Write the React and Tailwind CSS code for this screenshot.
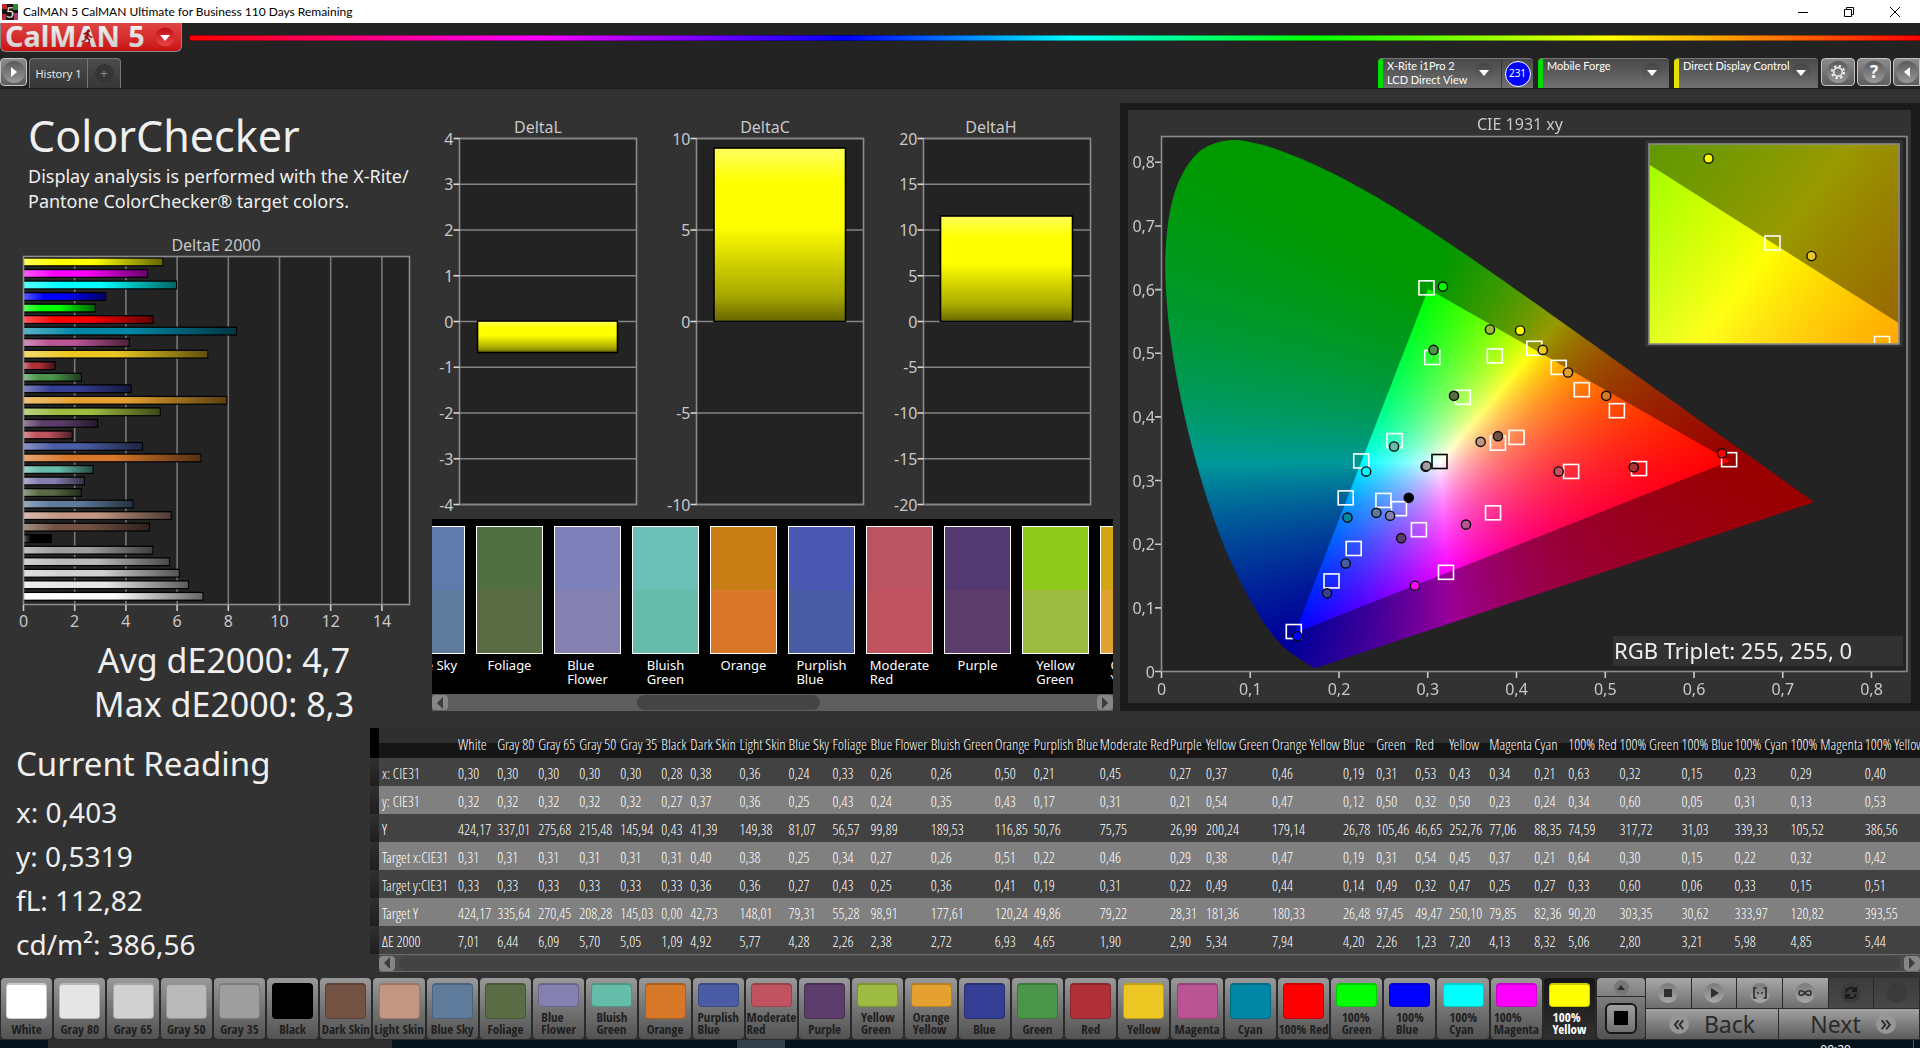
import React, { useLayoutEffect, useRef, useState } from "react";
import clsx from "clsx";

// name, column width, colour, x, y, Y, target x, target y, target Y, dE
const patches = [
  ["White", "w-[39px]", "#ffffff", "0,30", "0,32", "424,17", "0,31", "0,33", "424,17", "7,01"],
  ["Gray 80", "w-[41px]", "#e6e6e6", "0,30", "0,32", "337,01", "0,31", "0,33", "335,64", "6,44"],
  ["Gray 65", "w-[41px]", "#d1d1d1", "0,30", "0,32", "275,68", "0,31", "0,33", "270,45", "6,09"],
  ["Gray 50", "w-[41px]", "#bababa", "0,30", "0,32", "215,48", "0,31", "0,33", "208,28", "5,70"],
  ["Gray 35", "w-[41px]", "#9e9e9e", "0,30", "0,32", "145,94", "0,31", "0,33", "145,03", "5,05"],
  ["Black", "w-[29px]", "#000000", "0,28", "0,27", "0,43", "0,31", "0,33", "0,00", "1,09"],
  ["Dark Skin", "w-[49px]", "#735244", "0,38", "0,37", "41,39", "0,40", "0,36", "42,73", "4,92"],
  ["Light Skin", "w-[49px]", "#c39682", "0,36", "0,36", "149,38", "0,38", "0,36", "148,01", "5,77"],
  ["Blue Sky", "w-[44px]", "#5e7b9c", "0,24", "0,25", "81,07", "0,25", "0,27", "79,31", "4,28"],
  ["Foliage", "w-[38px]", "#596c43", "0,33", "0,43", "56,57", "0,34", "0,43", "55,28", "2,26"],
  ["Blue Flower", "w-[60px]", "#8480af", "0,26", "0,24", "99,89", "0,27", "0,25", "98,91", "2,38"],
  ["Bluish Green", "w-[64px]", "#64bca9", "0,26", "0,35", "189,53", "0,26", "0,36", "177,61", "2,72"],
  ["Orange", "w-[39px]", "#d77829", "0,50", "0,43", "116,85", "0,51", "0,41", "120,24", "6,93"],
  ["Purplish Blue", "w-[66px]", "#4a5ca4", "0,21", "0,17", "50,76", "0,22", "0,19", "49,86", "4,65"],
  ["Moderate Red", "w-[70px]", "#c15360", "0,45", "0,31", "75,75", "0,46", "0,31", "79,22", "1,90"],
  ["Purple", "w-[36px]", "#5c3c6a", "0,27", "0,21", "26,99", "0,29", "0,22", "28,31", "2,90"],
  ["Yellow Green", "w-[66px]", "#9dba41", "0,37", "0,54", "200,24", "0,38", "0,49", "181,36", "5,34"],
  ["Orange Yellow", "w-[71px]", "#e5a12f", "0,46", "0,47", "179,14", "0,47", "0,44", "180,33", "7,94"],
  ["Blue", "w-[33px]", "#343e94", "0,19", "0,12", "26,78", "0,19", "0,14", "26,48", "4,20"],
  ["Green", "w-[39px]", "#4a9549", "0,31", "0,50", "105,46", "0,31", "0,49", "97,45", "2,26"],
  ["Red", "w-[34px]", "#af3037", "0,53", "0,32", "46,65", "0,54", "0,32", "49,47", "1,23"],
  ["Yellow", "w-[40px]", "#ecc722", "0,43", "0,50", "252,76", "0,45", "0,47", "250,10", "7,20"],
  ["Magenta", "w-[45px]", "#ba5493", "0,34", "0,23", "77,06", "0,37", "0,25", "79,85", "4,13"],
  ["Cyan", "w-[34px]", "#0087a6", "0,21", "0,24", "88,35", "0,21", "0,27", "82,36", "8,32"],
  ["100% Red", "w-[51px]", "#ff0000", "0,63", "0,34", "74,59", "0,64", "0,33", "90,20", "5,06"],
  ["100% Green", "w-[62px]", "#00ff00", "0,32", "0,60", "317,72", "0,30", "0,60", "303,35", "2,80"],
  ["100% Blue", "w-[53px]", "#0000ff", "0,15", "0,05", "31,03", "0,15", "0,06", "30,62", "3,21"],
  ["100% Cyan", "w-[56px]", "#00ffff", "0,23", "0,31", "339,33", "0,22", "0,33", "333,97", "5,98"],
  ["100% Magenta", "w-[74px]", "#ff00ff", "0,29", "0,13", "105,52", "0,32", "0,15", "120,82", "4,85"],
  ["100% Yellow", "w-[58px]", "#ffff00", "0,40", "0,53", "386,56", "0,42", "0,51", "393,55", "5,44"],
];

const rowLabels = ["x: CIE31", "y: CIE31", "Y", "Target x:CIE31", "Target y:CIE31", "Target Y", "ΔE 2000"];

// measured over target
const comparator = [
  ["Blue Sky", "#607bab", "#5f7b9c"],
  ["Foliage", "#526f42", "#596c43"],
  ["Blue\nFlower", "#7e80ba", "#8480af"],
  ["Bluish\nGreen", "#6ac0b4", "#64bca9"],
  ["Orange", "#c87e14", "#d97829"],
  ["Purplish\nBlue", "#4a57b3", "#4a5ca4"],
  ["Moderate\nRed", "#ba5463", "#c15360"],
  ["Purple", "#52396f", "#5c3c6a"],
  ["Yellow\nGreen", "#8fc91b", "#9dba41"],
  ["Orange\nYellow", "#d3a514", "#e5a12f"],
];

const locus = [
  [0.1741, 0.005], [0.1733, 0.0048], [0.1714, 0.0051],
  [0.1689, 0.0069], [0.1644, 0.0109], [0.1566, 0.0177], [0.144, 0.0297], [0.1355, 0.0399],
  [0.1241, 0.0578], [0.1096, 0.0868], [0.0913, 0.1327], [0.0687, 0.2007], [0.0454, 0.295],
  [0.0235, 0.4127], [0.0082, 0.5384], [0.0039, 0.6548], [0.0139, 0.7502], [0.0389, 0.812],
  [0.0743, 0.8338], [0.1142, 0.8262], [0.1547, 0.8059], [0.1929, 0.7816], [0.2296, 0.7543],
  [0.2658, 0.7243], [0.3016, 0.6923], [0.3373, 0.6589], [0.3731, 0.6245], [0.4087, 0.5896],
  [0.4441, 0.5547], [0.4788, 0.5202], [0.5125, 0.4866], [0.5448, 0.4544], [0.5752, 0.4242],
  [0.6029, 0.3965], [0.627, 0.3725], [0.6482, 0.3514], [0.6658, 0.334], [0.6915, 0.3083],
  [0.7079, 0.292], [0.719, 0.2809], [0.73, 0.27], [0.7347, 0.2653],
];
const gamut = [[0.64, 0.33], [0.3, 0.6], [0.15, 0.06]];

const targets = [
  [0.298, 0.602], [0.3045, 0.4925], [0.375, 0.495], [0.4195, 0.507], [0.447, 0.477],
  [0.473, 0.442], [0.339, 0.43], [0.5125, 0.409], [0.262, 0.362], [0.2245, 0.33],
  [0.3785, 0.358], [0.3995, 0.367], [0.207, 0.272], [0.2495, 0.268], [0.267, 0.255],
  [0.2895, 0.222], [0.216, 0.1925], [0.191, 0.1415], [0.1485, 0.062], [0.32, 0.155],
  [0.373, 0.2485], [0.461, 0.3135], [0.5375, 0.318], [0.639, 0.332],
];

const readings = [
  [0.3165, 0.604, "#00ff00"], [0.3695, 0.5365, "#9dba41"], [0.4035, 0.535, "#ffff00"],
  [0.429, 0.5045, "#ecc722"], [0.4575, 0.469, "#e5a12f"], [0.306, 0.5045, "#4a9549"],
  [0.329, 0.4323, "#596c43"], [0.5005, 0.4323, "#d77829"], [0.2615, 0.3527, "#64bca9"],
  [0.23, 0.3135, "#00ffff"], [0.297, 0.321, "#ffffff"], [0.298, 0.322, "#9e9e9e"],
  [0.359, 0.36, "#c39682"], [0.3785, 0.369, "#735244"], [0.631, 0.342, "#ff0000"],
  [0.5315, 0.32, "#af3037"], [0.447, 0.3135, "#c15360"], [0.278, 0.272, "#000000"],
  [0.2415, 0.2485, "#5e7b9c"], [0.257, 0.244, "#8480af"], [0.209, 0.241, "#0087a6"],
  [0.3425, 0.23, "#ba5493"], [0.2695, 0.2087, "#5c3c6a"], [0.207, 0.169, "#4a5ca4"],
  [0.186, 0.122, "#343e94"], [0.285, 0.134, "#ff00ff"], [0.1525, 0.0547, "#0000ff"],
];

const num = (s) => parseFloat(s.replace(",", "."));

// plot boxes inside the 783 x 593 drawing
const mainBox = { left: 34, top: 27, w: 745, h: 534, x0: 0, y1: 534 / 636.5, sx: 887.5, sy: 636.5 };
const insetBox = { left: 521, top: 34, w: 250, h: 200, x0: 0.3878, y1: 0.5367, sx: 3976, sy: 3182 };

const toPx = (box, x, y) => [box.left + (x - box.x0) * box.sx, box.top + (box.y1 - y) * box.sy];

// Catmull-Rom through the sampled wavelengths
const smooth = (pts) =>
  pts.flatMap((p1, i) => {
    const p0 = pts[Math.max(i - 1, 0)];
    const p2 = pts[Math.min(i + 1, pts.length - 1)];
    const p3 = pts[Math.min(i + 2, pts.length - 1)];
    return [0, 1, 2, 3, 4, 5, 6, 7].map((n) => {
      const t = n / 8;
      return [0, 1].map(
        (k) =>
          0.5 *
          (2 * p1[k] +
            (p2[k] - p0[k]) * t +
            (2 * p0[k] - 5 * p1[k] + 4 * p2[k] - p3[k]) * t * t +
            (3 * p1[k] - p0[k] - 3 * p2[k] + p3[k]) * t * t * t)
      );
    });
  });

function fillChroma(ctx, box, outline, level) {
  const layer = document.createElement("canvas");
  layer.width = box.w;
  layer.height = box.h;
  const lctx = layer.getContext("2d");
  const img = lctx.createImageData(box.w, box.h);
  for (let j = 0; j < box.h; j++) {
    for (let i = 0; i < box.w; i++) {
      const x = box.x0 + i / box.sx;
      const y = Math.max(box.y1 - j / box.sy, 0.001);
      const X = x / y;
      const Z = (1 - x - y) / y;
      const r = Math.max(0, 3.2406 * X - 1.5372 - 0.4986 * Z);
      const g = Math.max(0, -0.9689 * X + 1.8758 + 0.0415 * Z);
      const b = Math.max(0, 0.0557 * X - 0.204 + 1.057 * Z);
      const k = (255 * level) / Math.max(r, g, b);
      img.data.set([r * k, g * k, b * k, 255], (j * box.w + i) * 4);
    }
  }
  lctx.putImageData(img, 0, 0);
  ctx.save();
  ctx.beginPath();
  ctx.rect(box.left, box.top, box.w, box.h);
  ctx.clip();
  ctx.beginPath();
  outline.forEach(([x, y]) => ctx.lineTo(...toPx(box, x, y)));
  ctx.closePath();
  ctx.clip();
  ctx.drawImage(layer, box.left, box.top);
  ctx.restore();
}

function ChromaCanvas() {
  const ref = useRef(null);
  useLayoutEffect(() => {
    const ctx = ref.current.getContext("2d");
    const horseshoe = smooth(locus);
    ctx.fillStyle = "#232323";
    ctx.fillRect(mainBox.left, mainBox.top, mainBox.w, mainBox.h);
    fillChroma(ctx, mainBox, horseshoe, 0.6);
    fillChroma(ctx, mainBox, gamut, 1);
    ctx.fillStyle = "#323232";
    ctx.fillRect(517, 30, 258, 207);
    fillChroma(ctx, insetBox, horseshoe, 0.6);
    fillChroma(ctx, insetBox, gamut, 1);
  }, []);
  return <canvas ref={ref} width="783" height="593" className="block w-full" />;
}

const Target = ({ cx, cy, stroke = "#ffffff" }) => (
  <rect x={cx - 7.5} y={cy - 7} width="15" height="14" fill="none" stroke={stroke} strokeWidth="1.6" />
);

const Reading = ({ cx, cy, fill }) => (
  <circle cx={cx} cy={cy} r="4.6" fill={fill} stroke="#0a0a0a" strokeWidth="1.4" />
);

function CieChart() {
  const ticks = [0, 1, 2, 3, 4, 5, 6, 7, 8];
  return (
    <div className="bg-[#1a1a1a] pl-2 pr-[9px] pt-[7px] pb-2">
      <div className="relative bg-[#323232]">
        <ChromaCanvas />
        <svg viewBox="0 0 783 593" className="absolute inset-0 w-full h-full text-[16px]" fill="#c8c8c8">
          <text x="392" y="20" textAnchor="middle">CIE 1931 xy</text>
          <rect x="33.5" y="26.5" width="745.5" height="535" fill="none" stroke="#8c8c8c" strokeWidth="1.6" />
          {ticks.map((t) => {
            const [x, y] = [33.5 + t * 88.75, 561.5 - t * 63.65];
            const label = t ? `0,${t}` : "0";
            return (
              <g key={t}>
                <path d={`M${x} 562v6M33 ${y}h-6`} stroke="#c8c8c8" strokeWidth="1.6" />
                <text x={x} y="585" textAnchor="middle">{label}</text>
                <text x="27" y={y + 6} textAnchor="end">{label}</text>
              </g>
            );
          })}
          {targets.map(([x, y]) => {
            const [cx, cy] = toPx(mainBox, x, y);
            return <Target key={`${x}-${y}`} cx={cx} cy={cy} />;
          })}
          <Target cx={311.5} cy={351.5} stroke="#000000" />
          {readings.map(([x, y, fill]) => {
            const [cx, cy] = toPx(mainBox, x, y);
            return <Reading key={`${x}-${y}`} cx={cx} cy={cy} fill={fill} />;
          })}
          <path d="M746.5 233v-6.5h15v6.5" fill="none" stroke="#ffffff" strokeWidth="1.6" />
          <Target cx={644.5} cy={133} />
          <Reading cx={580.5} cy={48.5} fill="#ffff00" />
          <Reading cx={683.5} cy={146} fill="#ecc722" />
          <rect x="521" y="34" width="250" height="200" fill="none" stroke="#8c8c8c" strokeWidth="1.6" />
          <rect x="485" y="526" width="290" height="30" fill="#323232" />
          <text x="486" y="549" fill="#efefef" className="text-[22px]">RGB Triplet: 255, 255, 0</text>
        </svg>
      </div>
    </div>
  );
}

function DeltaEChart() {
  const bars = [...patches].reverse();
  const unit = 25.6;
  return (
    <svg viewBox="0 0 432 424" className="block w-full text-[16px]" fill="#c8c8c8">
      <text x="216" y="37" textAnchor="middle">DeltaE 2000</text>
      <rect x="24" y="43" width="385" height="347" fill="#232323" />
      {[2, 4, 6, 8, 10, 12, 14].map((t) => (
        <path key={t} d={`M${23.5 + t * unit} 43v347`} stroke="#777777" strokeWidth="1.6" />
      ))}
      {bars.map((p, i) => {
        const y = 43.4 + i * 11.53;
        return (
          <g key={p[0]}>
            <linearGradient id={`bar${i}`}>
              <stop offset="0" stopColor={p[2]} />
              <stop offset="0.5" stopColor={p[2]} />
              <stop offset="1" stopColor={p[2]} stopOpacity="0.4" />
            </linearGradient>
            <rect x="24" y={y} width={num(p[9]) * unit} height="9" fill="#000000" />
            <rect x="24" y={y + 1.3} width={num(p[9]) * unit - 1} height="6.5" fill={`url(#bar${i})`} />
            <rect x="24" y={y + 1.3} width={num(p[9]) * unit * 0.25} height="6.5" fill="url(#shine)" />
          </g>
        );
      })}
      <linearGradient id="shine">
        <stop offset="0" stopColor="#ffffff" stopOpacity="0.35" />
        <stop offset="1" stopColor="#ffffff" stopOpacity="0" />
      </linearGradient>
      <rect x="23.5" y="42.5" width="386" height="348" fill="none" stroke="#8c8c8c" strokeWidth="1.6" />
      {[0, 2, 4, 6, 8, 10, 12, 14].map((t) => (
        <g key={t}>
          <path d={`M${23.5 + t * unit} 391v6`} stroke="#c8c8c8" strokeWidth="1.6" />
          <text x={23.5 + t * unit} y="413" textAnchor="middle">{t}</text>
        </g>
      ))}
    </svg>
  );
}

const deltas = [
  { name: "DeltaL", title: 106, left: 27.5, right: 204.5, step: 1, count: 4, bar: [45.5, 185.5, 232.5, 264] },
  { name: "DeltaC", title: 333, left: 264.5, right: 431.5, step: 5, count: 2, bar: [282, 413.5, 59.5, 233] },
  { name: "DeltaH", title: 559, left: 491.5, right: 658.5, step: 5, count: 4, bar: [508.5, 640.5, 127.5, 233] },
];

function DeltaCharts() {
  return (
    <svg viewBox="0 0 688 430" className="block w-full text-[16px]" fill="#c8c8c8">
      <linearGradient id="yellow" x2="0" y2="1">
        <stop offset="0" stopColor="#ffff60" />
        <stop offset="0.2" stopColor="#ffff00" />
        <stop offset="0.45" stopColor="#ffff00" />
        <stop offset="0.85" stopColor="#a8a800" />
        <stop offset="1" stopColor="#666600" />
      </linearGradient>
      {deltas.map((d) => {
        const lines = Array.from({ length: d.count * 2 + 1 }, (_, i) => d.count - i);
        const [x1, x2, y1, y2] = d.bar;
        return (
          <g key={d.name}>
            <text x={d.title} y="44" textAnchor="middle">{d.name}</text>
            <rect x={d.left} y="49.5" width={d.right - d.left} height="366" fill="#232323" stroke="#8c8c8c" strokeWidth="1.6" />
            {lines.map((n, i) => {
              const y = 49.5 + (366 / (d.count * 2)) * i;
              return (
                <g key={n}>
                  <path d={`M${d.left} ${y}H${d.right}`} stroke="#858585" strokeWidth="1.6" />
                  <path d={`M${d.left} ${y}h-6`} stroke="#d8d8d8" strokeWidth="1.6" />
                  <text x={d.left - 6} y={y + 6} textAnchor="end">{n * d.step}</text>
                </g>
              );
            })}
            <rect x={x1} y={y1 - 0.5} width={x2 - x1} height={y2 - y1} fill="url(#yellow)" stroke="#000000" strokeWidth="1.6" />
          </g>
        );
      })}
    </svg>
  );
}

function ScrollButton({ label, flip }) {
  return (
    <button aria-label={label} className="flex w-4 h-[15px] items-center justify-center rounded-sm bg-[#868686]">
      <svg viewBox="0 0 8 12" className={clsx("h-3 w-2", flip && "rotate-180")}>
        <path d="M7 0v12L1 6z" fill="#3c3c3c" />
      </svg>
    </button>
  );
}

function Comparator() {
  return (
    <div className="mr-[7px] bg-black">
      <div className="flex h-[175px] gap-[11px] overflow-hidden pt-[7px] text-[13px] leading-[14px] text-white">
        {comparator.map(([name, top, bottom], i) => (
          <div key={name} className={clsx("flex w-[67px] shrink-0 flex-col items-center", i === 0 && "-ml-[34px]")}>
            <div className="flex h-32 w-full flex-col border border-white">
              <div className="flex-1" style={{ backgroundColor: top }} />
              <div className="flex-1" style={{ backgroundColor: bottom }} />
            </div>
            <p className="whitespace-pre pt-1">{name}</p>
          </div>
        ))}
      </div>
      <div className="flex h-[17px] items-center justify-between bg-[#5e5e5e]">
        <ScrollButton label="Scroll left" />
        <div className="flex flex-1 px-1">
          <div className="grow-[184]" />
          <div className="h-[15px] grow-[182] rounded-full bg-[#444444]" />
          <div className="grow-[272]" />
        </div>
        <ScrollButton label="Scroll right" flip />
      </div>
    </div>
  );
}

function ResultsTable() {
  return (
    <div className="overflow-hidden text-white">
      <table className="w-full table-fixed border-collapse whitespace-nowrap text-left font-['Open_Sans_Condensed_Light','Noto_Sans_Condensed','Roboto_Condensed','Open_Sans_Condensed',sans-serif] text-[15px] leading-5">
        <colgroup>
          <col className="w-[9px]" />
          <col className="w-[76px]" />
          {patches.map((p) => <col key={p[0]} className={p[1]} />)}
        </colgroup>
        <thead>
          <tr className="h-[30px] bg-linear-to-b from-[#2e2e2e] from-50% to-[#151515] to-50%">
            <td className="bg-black" />
            <td />
            {patches.map((p) => (
              <th key={p[0]} scope="col" className="p-0 pl-[3px] pt-0.5 font-normal">{p[0]}</th>
            ))}
          </tr>
        </thead>
        <tbody>
          {rowLabels.map((label, r) => (
            <tr key={label} className={clsx("h-7", r % 2 ? "bg-[#808080]" : "bg-[#424242]")}>
              <td className="bg-linear-to-b from-[#303030] to-[#1e1e1e]" />
              <th scope="row" className="p-0 pl-[3px] pt-0.5 font-normal">{label}</th>
              {patches.map((p) => (
                <td key={p[0]} className="p-0 pl-[3px] pt-0.5">{p[r + 3]}</td>
              ))}
            </tr>
          ))}
        </tbody>
      </table>
      <div className="ml-[9px] flex h-[18px] items-center gap-1 border-y border-[#6a6a6a] bg-[#4c4c4c]">
        <ScrollButton label="Scroll table left" />
        <div className="h-[15px] flex-1 rounded-lg bg-[#434343]" />
        <ScrollButton label="Scroll table right" flip />
      </div>
    </div>
  );
}

const Orb = ({ className, children }) => (
  <span className={clsx("flex shrink-0 items-center justify-center rounded-full", className)}>{children}</span>
);

const DownArrow = () => (
  <svg viewBox="0 0 10 6" className="w-[10px]"><path d="M0 0h10L5 6z" fill="#ffffff" /></svg>
);

function SourceTab({ bar, width, lines, badge }) {
  return (
    <div className={clsx("flex h-[30px] overflow-hidden rounded-t border-t border-[#777777] bg-linear-to-b from-[#4a4a4a] to-[#707070]", width)}>
      <span className={clsx("w-[5px] shrink-0", bar)} />
      <button className="flex flex-1 items-start justify-between whitespace-nowrap pl-1 text-left font-['Lato','Noto_Sans',sans-serif] text-[11px] leading-[14px] text-white">
        <span className="w-0">{lines.map((l) => <span key={l} className="block">{l}</span>)}</span>
        <Orb className="mr-[7px] mt-1 size-5 bg-linear-to-b from-[#444444] to-[#6a6a6a]"><DownArrow /></Orb>
      </button>
      {badge && (
        <span className="flex w-8 shrink-0 items-center justify-center border-l border-[#3a3a3a]">
          <Orb className="size-[26px] border border-white bg-[#0000ff] text-[10px] text-white">{badge}</Orb>
        </span>
      )}
    </div>
  );
}

const ToolButton = ({ label, className, children }) => (
  <button
    aria-label={label}
    className={clsx("flex h-7 items-center justify-center rounded border border-[#c4c4c4] bg-linear-to-b from-[#8c8c8c] to-[#5e5e5e]", className)}
  >
    <Orb className="size-[22px] bg-linear-to-b from-[#5a5a5a] to-[#9a9a9a]">{children}</Orb>
  </button>
);

function TitleBar() {
  return (
    <div className="flex h-[23px] items-center justify-between bg-white text-black">
      <div className="flex items-center gap-[5px] pl-[2px] font-['Lato','Noto_Sans',sans-serif] text-[12px]">
        <svg viewBox="0 0 16 16" className="size-4">
          <path d="M0 0h16v16H0z" fill="#181010" />
          <path d="M0 0h5v5H0zM0 10h4v6H0z" fill="#c02828" />
          <path d="M11 0h5v6h-5z" fill="#2a8a38" />
          <path d="M12 9h4v7h-4z" fill="#b03a78" />
          <text x="8" y="14" textAnchor="middle" fill="#ffffff" stroke="#000000" strokeWidth="0.5" className="text-[15px] font-bold">5</text>
        </svg>
        <span>CalMAN 5 CalMAN Ultimate for Business 110 Days Remaining</span>
      </div>
      <div className="flex pr-[2px]">
        {[
          ["Minimize", "M0 5.5h10"],
          ["Restore", "M0.5 2.5h7v7h-7zM2.5 2.5v-2h7v7h-2"],
          ["Close", "M0 0l10 10M10 0L0 10"],
        ].map(([label, d]) => (
          <button key={label} aria-label={label} className="flex h-5 w-[46px] items-center justify-center">
            <svg viewBox="0 0 10 10" className="size-[10px] overflow-visible"><path d={d} fill="none" stroke="#000000" /></svg>
          </button>
        ))}
      </div>
    </div>
  );
}

function BrandBar() {
  return (
    <div className="flex h-[35px] gap-2">
      <button aria-label="CalMAN menu" className="h-[29px] w-[182px] rounded-b-md border border-t-0 border-[#8a8a8a] bg-linear-to-b from-[#e04444] to-[#c90d10]">
        <svg viewBox="0 0 181 28" className="block w-full">
          <defs>
            <linearGradient id="silver" x2="0" y2="1">
              <stop offset="0" stopColor="#ffffff" />
              <stop offset="1" stopColor="#c4c4c4" />
            </linearGradient>
            <linearGradient id="knob" x2="0" y2="1">
              <stop offset="0" stopColor="#c20a14" />
              <stop offset="1" stopColor="#e84848" />
            </linearGradient>
          </defs>
          <text x="4" y="24" fill="url(#silver)" className="text-[29px] font-bold">CalMAN</text>
          <text x="128" y="24" fill="url(#silver)" className="text-[29px] font-bold">5</text>
          <circle cx="88" cy="8" r="1.6" fill="#8f0f12" />
          <path d="M83 11l4-1.5 2 4 3 1M87 10l-1 5 3 2-1 4M86 15l-2 3-3 .5" fill="none" stroke="#8f0f12" strokeWidth="1.5" />
          <ellipse cx="165" cy="14" rx="9.5" ry="9.5" fill="url(#knob)" />
          <path d="M160 12h10l-5 6z" fill="#ffffff" />
        </svg>
      </button>
      <div className="mt-3 h-[6px] flex-1 border-y border-black/40 bg-[linear-gradient(to_right,#f00,#f0f_20%,#00f_38%,#0ff_51%,#0f0_65%,#ff0_82%,#f00)]" />
    </div>
  );
}

function TabBar() {
  return (
    <div className="flex h-[31px] items-start justify-between border-b border-[#1c1c1c]">
      <div className="flex gap-[2px]">
        <ToolButton label="Expand panel" className="w-[27px]">
          <svg viewBox="0 0 6 10" className="w-[6px]"><path d="M0 0l6 5-6 5z" fill="#ffffff" /></svg>
        </ToolButton>
        <div className="flex h-[30px] rounded-t border border-b-0 border-[#777777] bg-linear-to-b from-[#4d4d4d] to-[#363636]">
          <button className="w-[58px] border-r border-[#777777] pt-0.5 text-[11px] text-[#e6e6e6]">History 1</button>
          <button aria-label="Add history" className="flex w-8 items-center justify-center">
            <Orb className="size-[19px] bg-[#353535] text-[13px] text-[#888888]">+</Orb>
          </button>
        </div>
      </div>
      <div className="flex gap-[2px]">
        <div className="flex gap-[5px] pr-[1px]">
          <SourceTab bar="bg-[#00dd00]" width="w-[155px]" lines={["X-Rite i1Pro 2", "LCD Direct View"]} badge="231" />
          <SourceTab bar="bg-[#00dd00]" width="w-[131px]" lines={["Mobile Forge"]} />
          <SourceTab bar="bg-[#e8e000]" width="w-[144px]" lines={["Direct Display Control"]} />
        </div>
        <ToolButton label="Settings" className="w-[34px]">
          <svg viewBox="0 0 16 16" className="size-4" fill="none" stroke="#f2f2f2">
            <circle cx="8" cy="8" r="4.3" strokeWidth="1.5" />
            <circle cx="8" cy="8" r="6.1" strokeWidth="2" strokeDasharray="2.4 2.39" />
          </svg>
        </ToolButton>
        <ToolButton label="Help" className="w-[34px]">
          <span className="text-[17px] font-bold text-white">?</span>
        </ToolButton>
        <ToolButton label="Collapse panel" className="w-[27px] rounded-r-none">
          <svg viewBox="0 0 6 10" className="w-[6px]"><path d="M6 0L0 5l6 5z" fill="#ffffff" /></svg>
        </ToolButton>
      </div>
    </div>
  );
}

const transport = [
  ["Stop", <path d="M5 5h8v8H5z" fill="#2e2e2e" />],
  ["Play", <path d="M6 4l8 5-8 5z" fill="#2e2e2e" />],
  ["Read series", <path d="M5.5 4H3v10h2.5M12.5 4H15v10h-2.5M6 9h2M10 9h2" fill="none" stroke="#2e2e2e" strokeWidth="1.6" />],
  ["Read continuously", <path d="M9 9C7.5 6.5 3 5.5 3 9s4.5 2.5 6 0 6-3.5 6 0-4.5 2.5-6 0z" fill="none" stroke="#2e2e2e" strokeWidth="1.6" />],
  ["Repeat", <path d="M4 8.5a5 5 0 0 1 9-2.5M14 3v4h-4M14 9.5a5 5 0 0 1-9 2.5M4 15v-4h4" fill="none" stroke="#1a1a1a" strokeWidth="2" />],
  ["Auto advance", null],
];

function BottomBar() {
  const [active, setActive] = useState("100% Yellow");
  return (
    <div className="grid h-[62px] grid-cols-[minmax(0,1596fr)_minmax(0,50fr)_minmax(0,274fr)] bg-[#2a2a2a] pb-[1px]">
      <div className="flex gap-[2px] px-px text-[13px] leading-3">
        {patches.map(([name, , color]) => {
          const on = name === active;
          const two = name.length > 10 || /^100% [BCG]/.test(name);
          return (
            <button
              key={name}
              onClick={() => setActive(name)}
              className={clsx(
                "flex min-w-0 flex-1 flex-col items-center justify-between rounded-[4px] pb-1 pt-[5px] font-['Open_Sans_Condensed','Noto_Sans',sans-serif] font-bold",
                on ? "bg-linear-to-b from-[#161616] to-[#303030] text-white" : "bg-linear-to-b from-[#999999] to-[#525252] text-[#202020]"
              )}
            >
              <span
                className={clsx("w-[41px] rounded-[4px] border border-t-2 border-black/20", two ? "h-6" : "h-9")}
                style={{ backgroundColor: color }}
              />
              <span className="whitespace-pre text-left">{two ? name.replace(" ", "\n") : name}</span>
            </button>
          );
        })}
      </div>
      <div className="flex flex-col gap-px px-px">
        <button aria-label="Previous group" className="flex h-[18px] items-center justify-center rounded-t bg-linear-to-b from-[#999999] to-[#808080]">
          <Orb className="size-[15px] bg-[#777777]">
            <svg viewBox="0 0 8 5" className="w-2"><path d="M0 5h8L4 0z" fill="#2e2e2e" /></svg>
          </Orb>
        </button>
        <button aria-label="Pattern window" className="flex flex-1 items-center justify-center rounded-b bg-linear-to-b from-[#7d7d7d] to-[#525252]">
          <span className="flex h-[31px] w-8 items-center justify-center rounded-md border-2 border-[#181818] bg-linear-to-b from-[#a0a0a0] to-[#707070]">
            <span className="h-[14px] w-[14px] bg-black" />
          </span>
        </button>
      </div>
      <div className="flex flex-col gap-px pr-px">
        <div className="flex h-[30px] gap-px">
          {transport.map(([label, icon], i) => (
            <button
              key={label}
              aria-label={label}
              disabled={i > 3}
              className={clsx("flex flex-1 items-center justify-center bg-linear-to-b", i > 3 ? "from-[#3c3c3c] to-[#484848]" : "from-[#a8a8a8] to-[#6e6e6e]")}
            >
              <Orb className={clsx("size-5", i > 3 ? "bg-[#3a3a3a]" : "bg-linear-to-b from-[#7a7a7a] to-[#a8a8a8]")}>
                <svg viewBox="0 0 18 18" className="size-[18px]">{icon}</svg>
              </Orb>
            </button>
          ))}
        </div>
        <div className="flex flex-1 gap-px text-[23px] leading-7 text-[#2a2a2a]">
          <button className="flex flex-1 items-center justify-center gap-[15px] bg-linear-to-b from-[#a2a2a2] to-[#5c5c5c]">
            <Orb className="size-5 bg-[#979797] pb-1">«</Orb>Back
          </button>
          <button className="flex flex-1 items-center justify-center gap-[15px] bg-linear-to-b from-[#a2a2a2] to-[#5c5c5c] pl-2">
            Next<Orb className="size-5 bg-[#979797] pb-1">»</Orb>
          </button>
        </div>
      </div>
    </div>
  );
}

function Taskbar() {
  return (
    <div className="flex h-2 overflow-hidden bg-[#03121b]">
      <div className="w-12" />
      <div className="w-[344px] bg-[#2e2e2e]" />
      <div className="w-[345px]" />
      <div className="w-12 bg-[#33404c]" />
      <div className="flex flex-1 justify-end border-r border-[#55606a] pr-[62px] pt-0.5 text-[12px] leading-4 text-white">00:20</div>
      <div className="w-[6px]" />
    </div>
  );
}

const App = () => {
  return (
    <div className="flex min-h-screen flex-col overflow-hidden bg-[#323232] font-['Noto_Sans',sans-serif] text-[#efefef]">
      <TitleBar />
      <header className="bg-[#232323]">
        <BrandBar />
        <TabBar />
      </header>
      <main className="flex-1">
        <div className="grid grid-cols-[minmax(0,432fr)_minmax(0,688fr)_minmax(0,800fr)]">
          <section>
            <div className="pl-7 pt-[19px]">
              <h1 className="text-[43px] leading-[56px]">ColorChecker</h1>
              <p className="whitespace-nowrap text-[18px] leading-[25px]">
                Display analysis is performed with the X-Rite/
                <br />
                Pantone ColorChecker® target colors.
              </p>
            </div>
            <DeltaEChart />
            <div className="pl-4 text-center text-[34px] leading-[44px]">
              <p>Avg dE2000: 4,7</p>
              <p>Max dE2000: 8,3</p>
            </div>
          </section>
          <section>
            <DeltaCharts />
            <Comparator />
          </section>
          <section className="pt-[14px] pb-[17px]">
            <CieChart />
          </section>
        </div>
        <div className="grid grid-cols-[minmax(0,370fr)_minmax(0,1550fr)]">
          <section className="pl-4 pt-[14px]">
            <h2 className="text-[33px] leading-[44px]">Current Reading</h2>
            <div className="pt-1 text-[28px] leading-[44px]">
              <p>x: 0,403</p>
              <p>y: 0,5319</p>
              <p>fL: 112,82</p>
              <p>cd/m²: 386,56</p>
            </div>
          </section>
          <section>
            <ResultsTable />
          </section>
        </div>
      </main>
      <footer>
        <BottomBar />
        <Taskbar />
      </footer>
    </div>
  );
};

export default App;
